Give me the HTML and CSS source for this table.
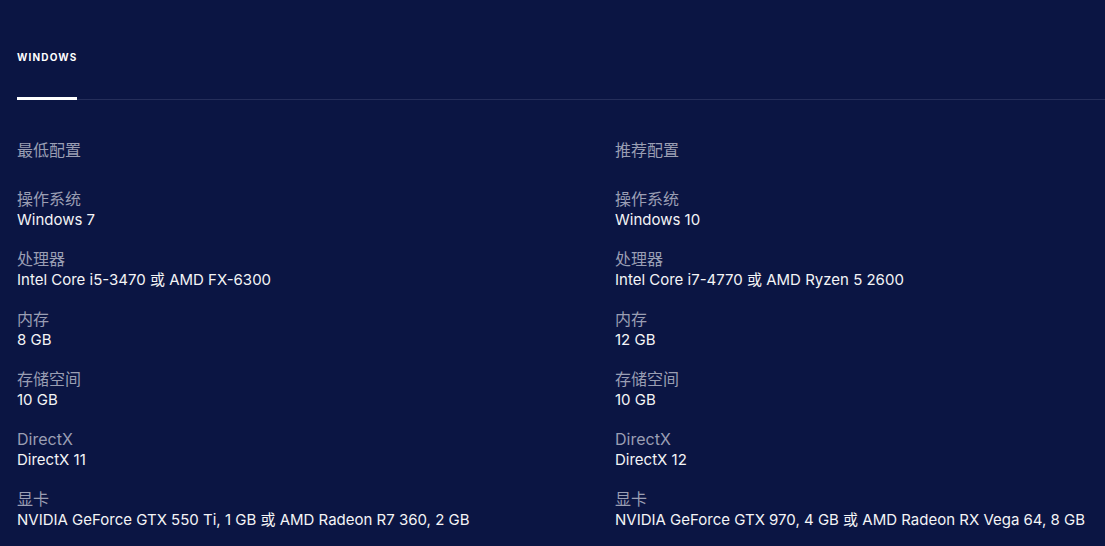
FILE: index.html
```html
<!DOCTYPE html>
<html lang="zh">
<head>
<meta charset="utf-8">
<link rel="stylesheet" href="styles.css">
</head>
<body>
<div class="page">
  <div class="tabs">
    <div class="tab active">WINDOWS</div>
  </div>
  <div class="specs">
    <div class="col">
      <div class="col-title">最低配置</div>
      <div class="item"><div class="label">操作系统</div><div class="value">Windows 7</div></div>
      <div class="item"><div class="label">处理器</div><div class="value">Intel Core i5-3470 或 AMD FX-6300</div></div>
      <div class="item"><div class="label">内存</div><div class="value">8 GB</div></div>
      <div class="item"><div class="label">存储空间</div><div class="value">10 GB</div></div>
      <div class="item"><div class="label">DirectX</div><div class="value">DirectX 11</div></div>
      <div class="item"><div class="label">显卡</div><div class="value">NVIDIA GeForce GTX 550 Ti, 1 GB 或 AMD Radeon R7 360, 2 GB</div></div>
    </div>
    <div class="col">
      <div class="col-title">推荐配置</div>
      <div class="item"><div class="label">操作系统</div><div class="value">Windows 10</div></div>
      <div class="item"><div class="label">处理器</div><div class="value">Intel Core i7-4770 或 AMD Ryzen 5 2600</div></div>
      <div class="item"><div class="label">内存</div><div class="value">12 GB</div></div>
      <div class="item"><div class="label">存储空间</div><div class="value">10 GB</div></div>
      <div class="item"><div class="label">DirectX</div><div class="value">DirectX 12</div></div>
      <div class="item"><div class="label">显卡</div><div class="value">NVIDIA GeForce GTX 970, 4 GB 或 AMD Radeon RX Vega 64, 8 GB</div></div>
    </div>
  </div>
</div>
</body>
</html>
```

FILE: styles.css
```css
html, body {
  margin: 0;
  padding: 0;
  background: #0b1543;
  overflow: hidden;
}
body {
  font-family: Inter, "Noto Sans CJK SC", sans-serif;
  color: #f2f2f4;
}
.page {
  padding-left: 17px;
}
.tabs {
  display: flex;
  border-bottom: 1px solid #252e5a;
}
.tab {
  box-sizing: border-box;
  height: 100px;
  padding-top: 48px;
  line-height: 18px;
  font-size: 10px;
  font-weight: 700;
  letter-spacing: 1.15px;
  color: #ffffff;
  margin-bottom: -1px;
}
.tab.active {
  border-bottom: 3px solid #ffffff;
}
.specs {
  display: grid;
  grid-template-columns: 598px 1fr;
  padding-top: 40px;
}
.col-title {
  font-size: 16px;
  line-height: 20px;
  color: #9a9eb3;
  margin-bottom: 29px;
}
.item {
  margin-bottom: 19px;
}
.label {
  font-size: 16px;
  line-height: 20px;
  color: #9a9eb3;
}
.value {
  font-size: 15px;
  line-height: 20px;
  padding-top: 1px;
  font-weight: 400;
  color: #f4f4f6;
  white-space: nowrap;
}
```
